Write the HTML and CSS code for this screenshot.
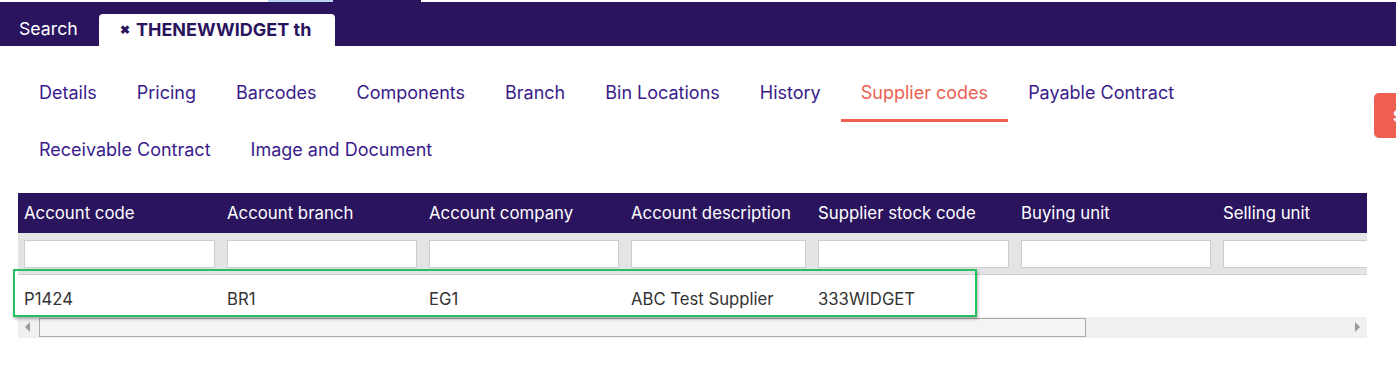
FILE: index.html
```html
<!DOCTYPE html>
<html lang="en">
<head>
  <meta charset="UTF-8">
  <title>Stock item - Supplier codes</title>
  <link rel="stylesheet" href="styles.css">
</head>
<body>

<div class="top-strip">
  <span class="strip-light"></span>
  <span class="strip-dark"></span>
</div>

<div class="navbar">
  <span class="nav-search">Search</span>
  <div class="nav-tab"><span class="close">&#10006;</span> THENEWWIDGET th</div>
</div>

<div class="content">
  <div class="tabs">
    <a class="tab">Details</a>
    <a class="tab">Pricing</a>
    <a class="tab">Barcodes</a>
    <a class="tab">Components</a>
    <a class="tab">Branch</a>
    <a class="tab">Bin Locations</a>
    <a class="tab">History</a>
    <a class="tab active">Supplier codes</a>
    <a class="tab">Payable Contract</a>
    <a class="tab">Receivable Contract</a>
    <a class="tab">Image and Document</a>
  </div>

  <button class="side-button">S</button>

  <div class="grid-wrap">
    <div class="grid-scroll">
      <table class="grid">
        <colgroup>
          <col class="c1"><col class="c2"><col class="c3"><col class="c4"><col class="c5"><col class="c6"><col class="c7">
        </colgroup>
        <thead>
          <tr class="head-row">
            <th>Account code</th>
            <th>Account branch</th>
            <th>Account company</th>
            <th>Account description</th>
            <th>Supplier stock code</th>
            <th>Buying unit</th>
            <th>Selling unit</th>
          </tr>
          <tr class="filter-row">
            <td><input type="text"></td>
            <td><input type="text"></td>
            <td><input type="text"></td>
            <td><input type="text"></td>
            <td><input type="text"></td>
            <td><input type="text"></td>
            <td><input type="text"></td>
          </tr>
        </thead>
        <tbody>
          <tr class="data-row">
            <td>P1424</td>
            <td>BR1</td>
            <td>EG1</td>
            <td>ABC Test Supplier</td>
            <td>333WIDGET</td>
            <td></td>
            <td></td>
          </tr>
        </tbody>
      </table>
    </div>

    <div class="scrollbar">
      <span class="arrow left"></span>
      <div class="thumb"></div>
      <span class="arrow right"></span>
    </div>

    <!-- highlight round the selected row -->
    <div class="row-highlight"></div>
  </div>
</div>

</body>
</html>
```

FILE: styles.css
```css
body {
  margin: 0;
  font-family: Inter, "Open Sans", sans-serif;
  background: #fff;
  overflow: hidden;
}

.top-strip {
  display: flex;
  height: 2px;
  background: #fff;
}

.strip-light {
  width: 65px;
  margin-left: 268px;
  background: #bcd6f2;
}

.strip-dark {
  width: 88px;
  background: #2a145e;
}

.navbar {
  display: flex;
  align-items: flex-end;
  height: 44px;
  background: #2a145e;
}

.nav-search {
  color: #fff;
  font-size: 17.7px;
  padding: 0 21px 7px 19px;
}

.nav-tab {
  width: 236px;
  height: 32px;
  box-sizing: border-box;
  padding: 5px 0 0 21px;
  background: #fff;
  border-radius: 4px 4px 0 0;
  color: #2a145e;
  font-size: 18px;
  font-weight: 700;
  white-space: nowrap;
}

.nav-tab .close {
  font-size: 12px;
  margin-right: 2px;
  position: relative;
  top: -2px;
}

.content {
  position: relative;
}

.tabs {
  display: flex;
  flex-wrap: wrap;
  width: 1180px;
  padding: 19px 0 0 19px;
}

.tab {
  height: 57px;
  box-sizing: border-box;
  padding: 17px 20px 0 20px;
  color: #3a1b8c;
  font-size: 18px;
  border-bottom: 3px solid transparent;
  cursor: pointer;
}

.tab.active {
  color: #ee5f4f;
  border-bottom-color: #ee5f4f;
}

.side-button {
  position: absolute;
  left: 1374px;
  top: 47px;
  width: 40px;
  height: 45px;
  border: none;
  border-radius: 5px;
  background: #ee5f4f;
  color: #fff;
  font-family: inherit;
  font-size: 16px;
  font-weight: 700;
  text-align: left;
  padding: 0 0 0 19px;
}

.grid-wrap {
  position: relative;
  width: 1349px;
  margin: 14px 0 0 18px;
}

.grid-scroll {
  overflow: hidden;
}

.grid {
  border-collapse: collapse;
  table-layout: fixed;
  width: 1420px;
}

.c1 { width: 203px; }
.c2 { width: 202px; }
.c3 { width: 202px; }
.c4 { width: 187px; }
.c5 { width: 203px; }
.c6 { width: 202px; }
.c7 { width: 221px; }

.head-row th {
  height: 40px;
  padding: 0 6px;
  background: #2a145e;
  color: #fff;
  font-size: 16.8px;
  font-weight: 400;
  text-align: left;
}

.filter-row td {
  height: 41px;
  padding: 0 6px;
  background: #e4e4e4;
  border-bottom: 1px solid #cfcfcf;
}

.filter-row input {
  display: block;
  width: 100%;
  height: 28px;
  box-sizing: border-box;
  border: 1px solid #cdcdcd;
  background: #fff;
}

.data-row td {
  height: 42px;
  padding: 6px 6px 0;
  box-sizing: border-box;
  color: #333;
  font-size: 16.7px;
}

.scrollbar {
  display: flex;
  align-items: center;
  height: 21px;
  background: #f0f0f0;
}

.thumb {
  width: 1045px;
  height: 17px;
  margin-left: 9px;
  border: 1px solid #aaa;
  background: #f4f4f4;
}

.arrow {
  width: 0;
  height: 0;
  border-top: 5px solid transparent;
  border-bottom: 5px solid transparent;
}

.arrow.left {
  margin-left: 7px;
  border-right: 5px solid #999;
}

.arrow.right {
  margin-left: auto;
  margin-right: 7px;
  border-left: 5px solid #999;
}

.row-highlight {
  position: absolute;
  left: -5px;
  top: 76px;
  width: 960px;
  height: 44px;
  border: 2px solid #22c05e;
  box-shadow: 1px 2px 3px rgba(0, 0, 0, 0.3);
  pointer-events: none;
}
```
